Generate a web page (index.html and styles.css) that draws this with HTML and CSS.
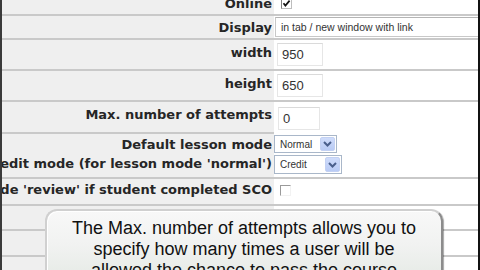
FILE: index.html
```html
<!DOCTYPE html>
<html>
<head>
<meta charset="utf-8">
<link rel="stylesheet" href="styles.css">
</head>
<body>
<div class="page">
  <div class="form">
    <div class="row h24">
      <div class="lbl">Online</div>
      <div class="val"><span class="cb cb-on"><svg width="9" height="9" viewBox="0 0 9 9"><polyline points="1.5,4.2 3.4,6.6 7.6,1.6" fill="none" stroke="#111" stroke-width="1.7"/></svg></span></div>
    </div>
    <div class="row h24">
      <div class="lbl">Display</div>
      <div class="val"><div class="field wide">in tab / new window with link</div></div>
    </div>
    <div class="row h31">
      <div class="lbl raise">width</div>
      <div class="val"><div class="field num">950</div></div>
    </div>
    <div class="row h31">
      <div class="lbl raise">height</div>
      <div class="val"><div class="field num">650</div></div>
    </div>
    <div class="row h32 open">
      <div class="lbl raise ruled">Max. number of attempts</div>
      <div class="val"><div class="field num short">0</div></div>
    </div>
    <div class="row h21 open">
      <div class="lbl">Default lesson mode</div>
      <div class="val"><div class="select s-normal"><span class="opt">Normal</span><span class="arrow"><svg width="9" height="6" viewBox="0 0 9 6"><polyline points="1,1 4.5,4.5 8,1" fill="none" stroke="#4a5f8c" stroke-width="2"/></svg></span></div></div>
    </div>
    <div class="row h24">
      <div class="lbl raise-more">Credit mode (for lesson mode 'normal')</div>
      <div class="val"><div class="select s-credit"><span class="opt">Credit</span><span class="arrow"><svg width="9" height="6" viewBox="0 0 9 6"><polyline points="1,1 4.5,4.5 8,1" fill="none" stroke="#4a5f8c" stroke-width="2"/></svg></span></div></div>
    </div>
    <div class="row h27">
      <div class="lbl raise-less">Set lesson mode 'review' if student completed SCO</div>
      <div class="val"><span class="cb cb-off"></span></div>
    </div>
    <div class="row h25">
      <div class="lbl"></div>
      <div class="val"></div>
    </div>
    <div class="row h26">
      <div class="lbl"></div>
      <div class="val"></div>
    </div>
    <div class="row h30">
      <div class="lbl"></div>
      <div class="val"></div>
    </div>
  </div>
  <div class="tip">The Max. number of attempts allows you to specify how many times a user will be allowed the chance to pass the course</div>
</div>
</body>
</html>
```
FILE: styles.css
```css
* { box-sizing: border-box; }
html, body { margin: 0; padding: 0; background: #fff; }

.page {
  position: relative;
  width: 480px;
  height: 270px;
  overflow: hidden;
  background: #fff;
  border-left: 2px solid #3a3a3a;
  border-right: 2px solid #111;
}

.form { margin-top: -8px; }

.row {
  display: flex;
  border-bottom: 2px solid #c9c9c9;
}
.row.open { border-bottom: none; }

.h21 { height: 21px; }
.h24 { height: 24px; }
.h25 { height: 25px; }
.h26 { height: 26px; }
.h27 { height: 27px; }
.h30 { height: 30px; }
.h31 { height: 31px; }
.h32 { height: 32px; }

.lbl {
  flex: none;
  width: 272px;
  background: #efefef;
  display: flex;
  justify-content: flex-end;
  align-items: center;
  padding-right: 2px;
  font: bold 13px "DejaVu Sans", Verdana, sans-serif;
  color: #262626;
  white-space: nowrap;
}
.lbl.ruled { border-bottom: 2px solid #c9c9c9; }
.lbl.raise { padding-bottom: 5px; }
.lbl.raise-more { padding-bottom: 6px; }
.lbl.raise-less { padding-bottom: 4px; }

.val {
  flex: 1;
  display: flex;
  align-items: center;
  min-width: 0;
}

.field {
  background: #fff;
  border: 1px solid #dcdcdc;
  border-top-color: #c4c4c4;
  font-family: "Liberation Sans", Arial, sans-serif;
  color: #333;
  white-space: nowrap;
  display: flex;
  align-items: center;
}
.field.wide {
  margin-left: 1px;
  height: 20px;
  flex: 1;
  margin-right: -4px;
  font-size: 10.5px;
  padding-left: 5px;
  border-color: #c8c8c8;
  border-top-color: #b4b4b4;
}
.field.num {
  margin-left: 3px;
  width: 46px;
  height: 23px;
  font-size: 13px;
  padding-left: 4px;
  border-color: #e6e6e6;
  border-top-color: #dadada;
}
.field.short { width: 42px; margin-left: 4px; }

.cb {
  display: inline-flex;
  align-items: center;
  justify-content: center;
  width: 11px;
  height: 11px;
  background: #fff;
}
.cb-on {
  margin-left: 7px;
  border: 1px solid #bdbdbd;
  border-top-color: #808080;
  border-left-color: #808080;
}
.cb-off {
  margin-left: 6px;
  margin-top: -2px;
  border: 1px solid #f2f2f2;
  border-top-color: #9a9a9a;
  border-left-color: #9a9a9a;
}

.select {
  display: flex;
  align-items: stretch;
  background: #fff;
  border: 1px solid #a9b7c9;
  font: 10px "Liberation Sans", Arial, sans-serif;
  color: #333;
}
.select .opt {
  flex: 1;
  display: flex;
  align-items: center;
  padding-left: 5px;
}
.select .arrow {
  flex: none;
  width: 15px;
  margin: 1px;
  display: flex;
  align-items: center;
  justify-content: center;
  background: linear-gradient(#cfdcfb, #b9cbf5);
  border: 1px solid #c3d1f3;
  border-radius: 2px;
}
.s-normal { width: 63px; height: 18px; margin-top: -1px; }
.s-credit { width: 68px; height: 19px; margin-top: -3px; }

.tip {
  position: absolute;
  left: 43px;
  top: 209px;
  width: 398px;
  height: 90px;
  border-radius: 12px;
  border: 2px solid #d0d0d0;
  border-right-color: #8c8c8c;
  background: linear-gradient(#f8f8f8, #f1f2f1 40%, #dfe6df);
  box-shadow: inset 1px 1px 0 #fff, 1px 1px 1px rgba(0,0,0,0.35);
  padding: 7px 22px 0;
  text-align: center;
  font: 18px/21px "Liberation Sans", Arial, sans-serif;
  color: #111;
}
```
